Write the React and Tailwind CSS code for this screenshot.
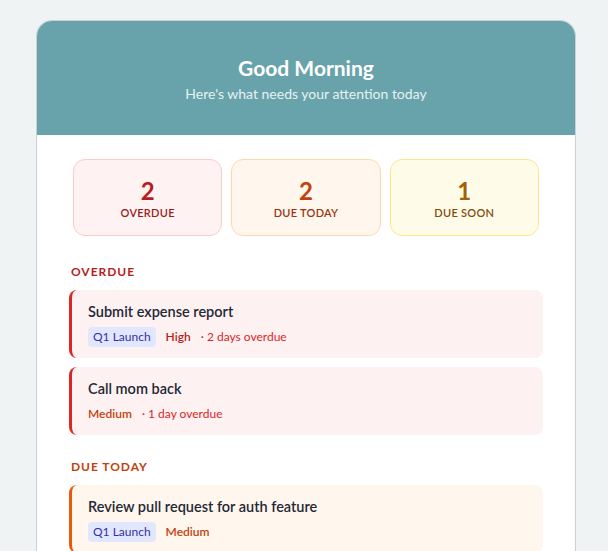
import React from 'react'

const stats = [
  { n: 2, label: 'Overdue', box: 'bg-[#fef2f2] border-[#fecaca]', num: 'text-[#b91c1c]', lab: 'text-[#991b1b]' },
  { n: 2, label: 'Due Today', box: 'bg-[#fff7ed] border-[#fed7aa]', num: 'text-[#c2410c]', lab: 'text-[#9a3412]' },
  { n: 1, label: 'Due Soon', box: 'bg-[#fefce8] border-[#fde68a]', num: 'text-[#a16207]', lab: 'text-[#854d0e]' },
]

function Task({ title, tag, priority, priorityClass, note, tone }) {
  const card = tone === 'red' ? 'bg-[#fef1f1] border-[#dc2626]' : 'bg-[#fff6ed] border-[#ea580c]'
  return (
    <div className={`rounded-lg border-l-[3px] px-4 pt-3 pb-[11px] ${card}`}>
      <div className="text-[14.5px] font-semibold leading-5 text-[#1f2937]">{title}</div>
      <div className="mt-[5px] flex h-5 items-center gap-[10px] text-[12px] leading-4">
        {tag && <span className="rounded bg-[#e0e7ff] px-[5px] py-[2px] text-[#3730a3]">{tag}</span>}
        <span className={`font-semibold ${priorityClass}`}>{priority}</span>
        {note && <span className="text-[#dc2626]">· {note}</span>}
      </div>
    </div>
  )
}

export default function App() {
  return (
    <div className="min-h-screen bg-[#f0f3f4] pt-5 pl-9" style={{ fontFamily: 'Lato, sans-serif' }}>
      <div className="w-[540px] overflow-hidden rounded-t-2xl border border-b-0 border-[#c9d1d6] bg-white">
        {/* Header */}
        <div className="flex h-[114px] flex-col items-center justify-center bg-[#68a3ac] pt-[2px] text-white">
          <h1 className="text-[21px] font-bold leading-7">Good Morning</h1>
          <p className="mt-[2px] text-[14px] leading-5 text-[#e6f1f2]">Here's what needs your attention today</p>
        </div>

        <div className="px-8 pt-6 pb-8">
          {/* Stats */}
          <div className="mx-1 grid grid-cols-3 gap-[9px]">
            {stats.map((s) => (
              <div key={s.label} className={`flex h-[77px] flex-col items-center rounded-xl border pt-[17px] ${s.box}`}>
                <div className={`text-[24px] font-bold leading-7 ${s.num}`}>{s.n}</div>
                <div className={`text-[11px] font-semibold uppercase leading-4 tracking-wide ${s.lab}`}>{s.label}</div>
              </div>
            ))}
          </div>

          {/* Overdue */}
          <h2 className="mt-7 ml-[2px] text-[12px] font-bold uppercase leading-4 tracking-[0.08em] text-[#b91c1c]">Overdue</h2>
          <div className="mt-[10px] flex flex-col gap-[9px]">
            <Task tone="red" title="Submit expense report" tag="Q1 Launch" priority="High" priorityClass="text-[#b91c1c]" note="2 days overdue" />
            <Task tone="red" title="Call mom back" priority="Medium" priorityClass="text-[#c2410c]" note="1 day overdue" />
          </div>

          {/* Due today */}
          <h2 className="mt-6 ml-[2px] text-[12px] font-bold uppercase leading-4 tracking-[0.08em] text-[#c2410c]">Due Today</h2>
          <div className="mt-[10px] flex flex-col gap-[9px]">
            <Task tone="orange" title="Review pull request for auth feature" tag="Q1 Launch" priority="Medium" priorityClass="text-[#c2410c]" />
          </div>
        </div>
      </div>
    </div>
  )
}
